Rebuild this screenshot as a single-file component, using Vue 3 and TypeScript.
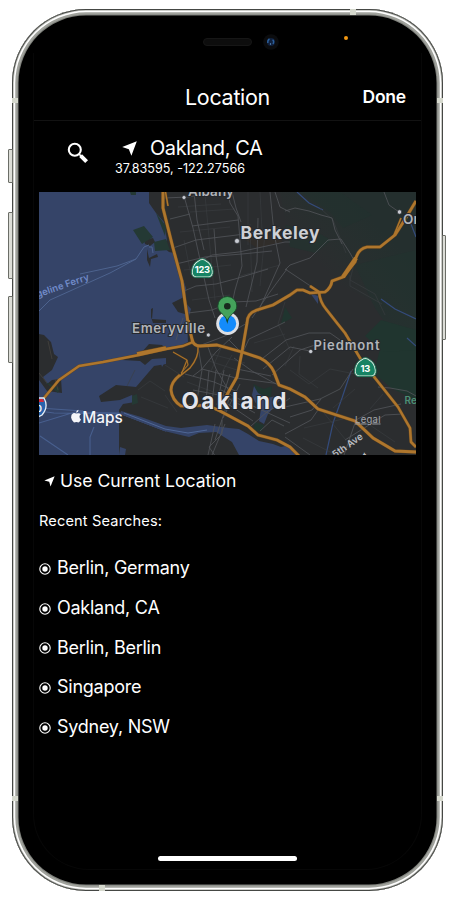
<script setup lang="ts">
interface Road {
  d: string
  w?: number
}

const recent: string[] = ['Berlin, Germany', 'Oakland, CA', 'Berlin, Berlin', 'Singapore', 'Sydney, NSW']

const highways: Road[] = [
  { d: 'M163 192L163 208L173 248L182 281L188 323L193 343', w: 2.8 },
  { d: 'M165.500 192L168 206' },
  { d: 'M189 320L192 342' },
  { d: 'M44 398L59 380L79 366L103 362L139 355L166 349L183 346L193 342', w: 2.4 },
  { d: 'M137 354L166 348', w: 3.6 },
  { d: 'M192 340Q194 346 200 346L217 345L242 352L260 358Q270 363 274 372L279 385L290 389L305 397L318 409L355 421L373 438L395 451L416 452', w: 2.8 },
  { d: 'M220 408L229 391L237 377L242 352L247 323Q247 313 257 310L273 305L290 295L297 290L303 290L310 293L325 292Q331 288 332 281L343 277L355 262Q357 249 367 247L380 247L395 235L404 221L416 201', w: 2.7 },
  { d: 'M343 277L356 258', w: 4 },
  { d: 'M394 235L401 218' },
  { d: 'M310 286L319 292Q320 302 326 309L337 323L345 333L360 358L375 378L398 407L410 428L411 442L416 447', w: 2.5 },
  { d: 'M180 375Q171 382 171 390Q172 400 181 406L193 406L207 405L220 411L248 426L258 435L277 440L290 447L299 456', w: 2.7 },
  { d: 'M173 352L187 360L181 375', w: 1 },
  { d: 'M198 347Q199 357 190 368L180 376', w: 1.1 },
  { d: 'M187 360L188 365L181 373', w: .8 }
]

const streets: string[] = [
  'M184 196L193 228L201 264L209 300L215 318',
  'M164 198L188 197L212 193',
  'M194 192L197 220L204 250',
  'M228 192L230 203L238 216L240 240L242 266L235 290L229 318',
  'M232 192L236 208L241 222',
  'M170 219L190 214', 'M192 226L238 220',
  'M173 248L196 240L237 235L280 228',
  'M176 264L205 257L242 254L272 251',
  'M184 291L196 286L216 284L235 279L268 269',
  'M188 313L212 310L232 302L256 301L278 294',
  'M214 229L216 256L222 292L229 315',
  'M204 259L212 255L239 252L285 242L290 242',
  'M275 192L280 207L290 212',
  'M270 192L274 233L280 263L258 312',
  'M258 218L257 262L246 307', 'M287 269L270 292L252 318',
  'M285 270L290 265L310 258L328 240L341 239L350 253L355 262',
  'M285 269L300 279L312 287',
  'M285 211L295 208L309 211L321 215L332 218L335 230L342 244',
  'M384 192L389 205L399 212',
  'M183 318L176 340', 'M196 347L225 336L247 323', 'M201 370L216 352L232 337',
  'M193 376L202 369L236 378L280 384', 'M198 346L202 370L197 400',
  'M208 347L216 369L229 391', 'M185 374L214 382L238 392', 'M193 390L224 396L255 413',
  'M209 370L206 401', 'M216 370L212 402', 'M224 370L217 405',
  'M230 374L219 408', 'M221 390L255 407L290 423',
  'M225 402L253 421', 'M230 396L215 440', 'M240 384L223 418',
  'M215 424L208 455', 'M225 424L212 455', 'M222 420L222 434L209 447L218 460',
  'M234 358L252 371L278 385', 'M237 369L271 376', 'M243 352L249 339L277 326L285 322',
  'M240 351L229 340', 'M263 358L286 340L309 333L330 333L340 340',
  'M263 369L290 347L310 351', 'M272 375L300 350L315 345',
  'M285 407L320 399L340 389L353 369', 'M290 417L312 410L321 399',
  'M285 434L311 420L318 410', 'M344 455L356 420L374 410L401 404',
  'M378 387L390 388L407 391L416 396', 'M345 440L385 415L403 414',
  'M285 437L310 455', 'M260 431L272 420L284 426', 'M251 426L268 411L282 404L290 398'
]

const faint: string[] = [
  'M178 207L221 204', 'M190 212L235 209', 'M180 232L230 227', 'M184 240L191 275',
  'M205 195L215 300', 'M248 192L248 245', 'M260 192L262 230', 'M184 270L231 265',
  'M192 300L230 295', 'M240 276L280 265', 'M250 224L252 292', 'M265 233L260 286',
  'M285 302L278 324L290 350', 'M355 260L350 280L375 294L385 315',
  'M320 208L333 220L346 253', 'M350 275L350 286L382 304', 'M187 382L240 402',
  'M165 365L184 377', 'M165 395L177 412', 'M138 390L150 381L165 391', 'M141 397L168 408',
  'M135 370L127 386', 'M211 354L245 363', 'M209 361L240 371', 'M221 348L211 371',
  'M232 355L221 374', 'M290 370L309 384L330 369L355 374', 'M300 356L299 374L318 388',
  'M320 408L345 439', 'M364 421L395 442', 'M294 346L285 366', 'M370 409L383 394',
  'M333 408L355 389', 'M303 438L334 454', 'M304 428L343 419', 'M254 343L285 334'
]
</script>

<template>
  <main class="stage">
    <div class="phone">
      <i class="side-key mute"></i>
      <i class="side-key up"></i>
      <i class="side-key down"></i>
      <i class="side-key power"></i>
      <i class="band b1"></i><i class="band b2"></i><i class="band b3"></i>
      <i class="band b4"></i><i class="band b5"></i><i class="band b6"></i>

      <div class="sensors">
        <i class="speaker"></i>
        <svg class="camera" viewBox="0 0 16 16">
          <circle cx="8" cy="8" r="7.800" fill="#0b0c0e" />
          <circle cx="8" cy="8" r="4" fill="#10203c" />
          <path d="M6.500 5Q4.500 6 4.800 9M9.500 6Q11.500 7 10 10" fill="none" stroke="#2b5f9c" stroke-width="1.400" />
          <circle cx="7.500" cy="10" r=".7" fill="#659bd3" />
        </svg>
        <i class="mic-dot"></i>
      </div>

      <div class="screen">
        <header class="nav">
          <span></span>
          <h1>Location</h1>
          <button type="button">Done</button>
        </header>

        <section class="place">
          <svg class="search" viewBox="0 0 22 22">
            <circle cx="7.800" cy="7.800" r="6" fill="none" stroke="#fff" stroke-width="2.100" />
            <path d="M12 12L14.500 14.500" stroke="#fff" stroke-width="1.700" />
            <path d="M13.600 13.600L19.600 19.600" stroke="#fff" stroke-width="4" />
          </svg>
          <div class="place-text">
            <div class="place-name">
              <svg viewBox="0 0 16 16"><path d="M15.800 .2L10 15.800L7.300 8.700L.2 6.500Z" fill="#fff" /></svg>
              <span>Oakland, CA</span>
            </div>
            <div class="coords">37.83595, -122.27566</div>
          </div>
        </section>

        <svg class="map" viewBox="39 192 377 263">
          <defs>
            <clipPath id="mapClip"><path d="M39 192H416V455H39Z" /></clipPath>
            <linearGradient id="hills" x1="0" y1="1" x2="1" y2="0">
              <stop offset=".4" stop-color="#24332f" stop-opacity="0" />
              <stop offset=".75" stop-color="#242f2e" />
            </linearGradient>
          </defs>
          <g clip-path="url(#mapClip)">
            <path d="M39 192H416V455H39Z" fill="#2b2d2f" />
            <path d="M280 192H416V340L390 330L370 300L330 280L290 250Z" fill="url(#hills)" />
            <g fill="#20352f">
              <path d="M285 225L315 231L331 240L316 253L290 247Z" opacity=".5" />
              <path d="M300 192L340 192L372 215L343 228L330 212Z" opacity=".35" />
              <path d="M355 265L416 250V345L394 336L375 308Z" opacity=".4" />
              <path d="M381 345L394 329L416 340V400L391 388L374 373Z" />
              <path d="M285 307L292 318L281 324Z" />
              <path d="M365 336L381 320L416 330V350L383 352Z" />
              <path d="M253 384L264 389L272 386L271 397L259 397Z" />
              <path d="M255 422L264 425L262 431L253 431Z" />
            </g>
            <path d="M244 239L280 232L282 242L257 248Z" fill="#302d2a" />
            <path fill="#354468" d="M39 192H149V203L156 213L164 222L167 240L163 247L169 252L174 253L180 270L186 288L185 302L191 309L187 323L188 342L180 346L166 349L162 345L149 344L141 353L122 360L140 361L145 365L152 359L166 358V364L154 366L136 387L116 385L99 396L101 402L120 400L132 395L135 402L123 404L119 410L119 455H39Z" />
            <g fill="#2b2d2f">
              <path d="M39 334L44 335L51 342L54 354L58 357L52 370L43 377L47 384L52 380L61 379L62 393L47 391L39 380Z" />
              <path d="M144 240L153 238L155 242L150 246L145 244ZM147 249L149 258L157 254L158 257L151 259L150 267L147 260Z" />
              <path d="M151 309L153 308L152 319L166 320V323H153L151 317Z" />
              <path d="M172 303L184 297L188 315L178 312Z" />
            </g>
            <path fill="#243934" d="M133 230L144 226L153 237L142 244ZM154 242L166 239L170 250L155 251ZM130 192H136V195L131 195ZM156 213L166 226L165 236ZM132 396L137 394L138 403L132 405ZM45 382L60 388L58 393Z" />
            <path d="M149 245L144 247L136 259L117 266L80 274M136 259L110 273L50 300L39 311M149 247H152L153 253" fill="none" stroke="#4d638e" stroke-width="1" />
            <path d="M39 423L75 412L119 413L166 431M39 408L83 411M94 427L90 437V455M40 436L68 455M39 411L54 413L123 414" fill="none" stroke="#485f8e" stroke-width="1.100" />
            <path fill="#354468" d="M121 411L141 417L166 426L181 428L207 425L229 428L239 429L248 434L259 441L273 444L281 447L290 445L300 455H239L232 442L224 437L216 432L199 433L189 437L164 431L120 414Z" />
            <path d="M124 413L165 429L188 433L207 430" fill="none" stroke="#4f6796" stroke-width="1" />
            <path fill="#354468" d="M254 386L258 393L267 398L276 396L280 400L273 408L268 414L264 424L259 421L261 409L255 402L252 395ZM310 293L318 296V304ZM120 447L126 449L125 455H119ZM160 360L165 362L162 367Z" />
            <path d="M297 192L309 203L323 210M381 299L395 309L416 319M407 338L416 346M351 371L342 398L333 423L326 455M411 224L416 237" fill="none" stroke="#344b7b" stroke-width="1.200" />
            <path d="M39 373L47 383M48 341L52 359M55 379L58 390" fill="none" stroke="#403e3b" />
            <g fill="none" stroke="#3b3e41" stroke-width=".6"><path v-for="d in faint" :key="d" :d="d" /></g>
            <g fill="none" stroke="#505357" stroke-width=".85"><path v-for="d in streets" :key="d" :d="d" /></g>
            <g fill="none" stroke="#62451f" stroke-linejoin="round"><path v-for="r in highways" :key="r.d" :d="r.d" :stroke-width="(r.w ?? 1.400) + .8" /></g>
            <g fill="none" stroke="#ae762d" stroke-linejoin="round"><path v-for="r in highways" :key="r.d" :d="r.d" :stroke-width="r.w ?? 1.400" /></g>

            <g class="dots"><circle cx="184" cy="197.500" r="2" /><circle cx="237" cy="241" r="2.500" /><circle cx="208.300" cy="335" r="2" /><circle cx="310.700" cy="351.500" r="2.100" /><circle cx="399.500" cy="212" r="2.200" /></g>

            <g class="map-label">
              <text x="188" y="196" font-size="13.500" textLength="46">Albany</text>
              <text x="240.500" y="239" class="strong" font-size="17.500" textLength="79">Berkeley</text>
              <text x="132" y="333" font-size="13.300" textLength="73">Emeryville</text>
              <text x="313.500" y="349.500" font-size="13" textLength="66">Piedmont</text>
              <text x="403" y="224" font-size="13.500">Orinda</text>
              <text x="181.500" y="408.500" class="city" font-size="22.500" textLength="105">Oakland</text>
            </g>
            <text class="ferry" transform="translate(32 299.500) rotate(-19)" font-size="9.500" textLength="61">ngeline Ferry</text>
            <text class="street" transform="translate(335 458) rotate(-35)" font-size="9.500">5th Ave</text>
            <text class="street" x="363" y="459" font-size="9">t</text>
            <text class="park" x="404.500" y="404" font-size="10">Re</text>
            <text class="legal" x="355" y="422.500" font-size="9.500" textLength="25.500">Legal</text>

            <g v-for="s in [{ x: 202.3, y: 268, n: '123' }, { x: 365.3, y: 367, n: '13' }]" :key="s.n" :transform="`translate(${s.x} ${s.y})`">
              <path d="M-6.500 9.600Q-11.300 9 -10.800 3Q-9.800 -5 -4 -7.800Q0 -11 4 -7.800Q9.800 -5 10.800 3Q11.300 9 6.500 9.600Z" fill="#e2ebe3" stroke="#187657" stroke-width=".9" />
              <path d="M-6 8.400Q-10.100 8 -9.500 3Q-8.500 -4.300 -3.600 -6.600Q0 -9.300 3.600 -6.600Q8.500 -4.300 9.500 3Q10.100 8 6 8.400Z" fill="#168363" />
              <text class="route" y="5.300" font-size="9.300" letter-spacing="-.3">{{ s.n }}</text>
            </g>
            <path d="M30 398H44Q49 407 42 415L36 418Z" fill="#2863ad" stroke="#e6edf5" stroke-width="1.300" />
            <path d="M30 399H43L44 402H30Z" fill="#d32939" />
            <text x="36" y="412" class="shield" font-size="9">0</text>

            <circle cx="227.600" cy="323.500" r="11.400" fill="#dedfe3" />
            <circle cx="227.600" cy="323.500" r="8.600" fill="#148bfa" />
            <path d="M227.300 321.500C225.500 314 217.800 313 217.800 306A9.500 9.500 0 0 1 236.800 306C236.800 313 229 314 227.300 321.500Z" fill="#44a25b" stroke="#174b29" stroke-width=".9" />
            <circle cx="227.300" cy="306.300" r="3.300" fill="#18291e" />
            <path d="M226.200 319.500H228.400L227.300 324Z" fill="#174b29" />

            <g fill="#f5f6fa">
              <path d="M76.100 413.600Q74.600 412.700 73.200 413.300Q70.900 414.300 71.100 417.500Q71.600 420.700 74 422.600L76.400 422.100L78.600 422.600Q80.200 421.500 81 419.400Q79.400 418.500 79.500 416.500Q79.600 415 80.800 414.200Q79.400 412.500 76.100 413.600Z" />
              <path d="M76.100 412.700Q76 410.300 78.600 409.700Q78.700 412 76.100 412.700Z" />
              <text class="maps" x="82.300" y="423.400" font-size="15.800" textLength="40.500" lengthAdjust="spacingAndGlyphs">Maps</text>
            </g>
          </g>
        </svg>

        <button type="button" class="current">
          <svg viewBox="0 0 16 16"><path d="M15.500 .5L9.500 15.200L7.600 8.400L.5 6.500Z" fill="#fff" /></svg>
          <span>Use Current Location</span>
        </button>
        <h2>Recent Searches:</h2>
        <ul class="recent">
          <li v-for="item in recent" :key="item">
            <svg viewBox="0 0 12 12"><circle cx="6" cy="6" r="5.200" fill="none" stroke="#fff" stroke-width="1.100" /><circle cx="6" cy="6" r="2.700" fill="#fff" /></svg>
            <span>{{ item }}</span>
          </li>
        </ul>
        <div class="home"></div>
      </div>
    </div>
  </main>
</template>

<style>
body {
  background: #fff;
}
</style>

<style scoped>
.stage {
  box-sizing: border-box;
  width: 455px;
  height: 900px;
  padding: 9px 12px;
  overflow: hidden;
  font-family: Inter, "Liberation Sans", sans-serif;
  color: #fff;
}
.phone {
  position: relative;
  box-sizing: border-box;
  width: 431px;
  height: 882px;
  padding: 22px 21px 0;
  border-radius: 74px;
  background: #000;
  box-shadow: inset 0 0 0 1px #454744, inset 0 0 0 1.800px #bfc0bb, inset 0 0 0 3.300px #fff, inset 0 0 0 5.500px #a0a29c, inset 0 0 0 6.500px #7d7f7a;
}
.side-key {
  position: absolute;
  box-sizing: border-box;
  width: 5px;
  left: -4px;
  border: 1px solid #6b6d67;
  border-radius: 1px;
  background: #dcddd7;
}
.mute { top: 140px; height: 34px; }
.up { top: 203px; height: 67px; }
.down { top: 287px; height: 67px; }
.power { left: 430px; top: 226px; height: 105px; width: 4px; }
.band { position: absolute; background: #d5d8cd; }
.b1, .b2, .b3, .b4 { width: 6px; height: 5px; }
.b1 { left: 0; top: 89px; }
.b2 { right: 0; top: 89px; }
.b3 { left: 0; top: 787px; }
.b4 { right: 0; top: 787px; }
.b5, .b6 { width: 6px; height: 6px; }
.b5 { left: 338px; top: 0; }
.b6 { left: 87px; bottom: 0; }
.sensors {
  display: flex;
  align-items: center;
  height: 22px;
  padding-left: 170px;
}
.speaker {
  box-sizing: border-box;
  width: 49px;
  height: 8px;
  border: 1px solid #161616;
  border-radius: 4px;
  background: #0d0d0d;
}
.camera { width: 16px; height: 16px; margin-left: 11px; }
.mic-dot {
  width: 4.500px;
  height: 4.500px;
  margin: -8px 0 0 64.500px;
  border-radius: 50%;
  background: #f39812;
}
.screen {
  box-sizing: border-box;
  display: flex;
  flex-direction: column;
  height: 817px;
  border: solid #070707;
  border-width: 0 1px 1px;
  border-radius: 0 0 56px 56px;
  padding-top: 22px;
}
button {
  border: 0;
  padding: 0;
  background: none;
  color: inherit;
  font-family: inherit;
}
.nav {
  display: grid;
  grid-template-columns: 1fr auto 1fr;
  align-items: center;
  box-sizing: border-box;
  height: 46px;
  padding: 0 15px 2px;
  border-bottom: 1px solid #121212;
}
h1 {
  margin: 0;
  font-size: 21.500px;
  line-height: 26px;
  font-weight: 400;
  letter-spacing: -.3px;
}
.nav button {
  justify-self: end;
  font-size: 17.500px;
  font-weight: 600;
  letter-spacing: -.2px;
}
.place {
  display: flex;
  height: 71px;
  padding-left: 33px;
}
.search { width: 22px; height: 22px; margin-top: 21px; }
.place-text { margin: 14px 0 0 26px; }
.place-name {
  display: flex;
  align-items: center;
  gap: 13px;
  height: 25px;
  padding-left: 7px;
  font-size: 20px;
  letter-spacing: -.43px;
}
.place-name svg { width: 15px; height: 15px; margin-top: 2px; }
.coords {
  font-size: 12.600px;
  line-height: 16px;
  padding-top: 1px;
}
.map {
  display: block;
  flex: none;
  width: 377px;
  height: 263px;
  margin-left: 5px;
}
.map-label text {
  fill: #b1b4b9;
  stroke: #25282d;
  stroke-width: 2px;
  paint-order: stroke;
  font-weight: 600;
}
.map-label .strong { fill: #ced0d5; font-weight: 700; }
.map-label .city { fill: #e3e5ec; font-weight: 700; }
.dots { fill: #c9ccd3; stroke: #292c30; stroke-width: .6; }
.ferry { fill: #718bc8; font-weight: 600; }
.street { fill: #babdc2; font-weight: 600; }
.park { fill: #4c9076; font-weight: 600; }
.legal { fill: #a2a5ab; text-decoration: underline; }
.route { fill: #fff; text-anchor: middle; font-weight: 700; }
.shield { fill: #fff; font-weight: 600; }
.maps { font-weight: 500; }
.current {
  display: flex;
  align-items: center;
  gap: 5px;
  height: 25px;
  margin: 13px 0 0 10px;
  font-size: 17.600px;
  letter-spacing: -.03px;
}
.current svg { width: 11px; height: 11px; margin-top: 2px; }
h2 {
  margin: 19px 0 0 5px;
  font-size: 14.600px;
  line-height: 18px;
  font-weight: 400;
  letter-spacing: .14px;
}
.recent {
  margin: 18px 0 0 5px;
  padding: 0;
  list-style: none;
}
.recent li {
  display: flex;
  align-items: center;
  gap: 6px;
  height: 39.700px;
  font-size: 18px;
  letter-spacing: -.25px;
}
.recent svg { width: 12px; height: 12px; margin-top: 2px; }
.home {
  width: 139px;
  height: 5px;
  margin: auto auto 8px;
  border-radius: 3px;
  background: #fff;
}
</style>
